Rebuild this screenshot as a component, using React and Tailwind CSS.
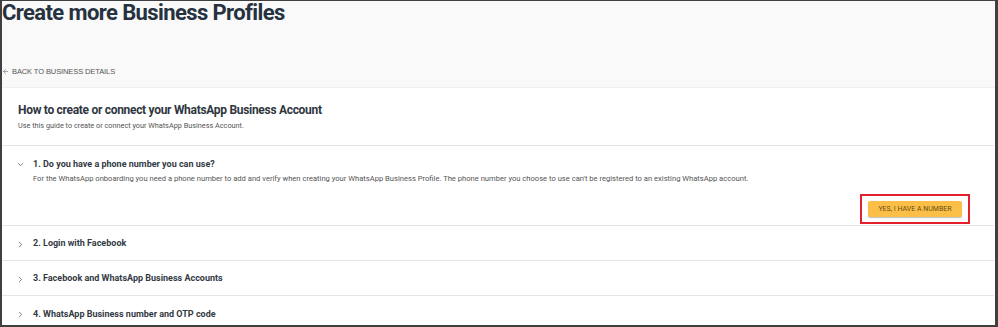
import React from 'react';
import { ChevronDown, ChevronRight, ArrowLeft } from 'lucide-react';

export default function App() {
  const steps = [
    '2. Login with Facebook',
    '3. Facebook and WhatsApp Business Accounts',
    '4. WhatsApp Business number and OTP code',
  ];

  return (
    <div
      className="w-[998px] h-[327px] overflow-hidden bg-white border-t border-l-2 border-r-[3px] border-b-2 border-[#3f3f3f] flex flex-col"
      style={{ fontFamily: 'Roboto, "Liberation Sans", Arial, sans-serif' }}
    >
      {/* Header */}
      <div className="bg-[#f9f9f9] h-[87px] shrink-0 border-b border-[#efefef] flex flex-col">
        <h1 className="text-[22px] leading-[24px] font-bold text-[#26323f] tracking-[-0.6px]">
          Create more Business Profiles
        </h1>
        <div className="mt-[41px] flex items-center gap-[3px] text-[7.5px] text-[#555] tracking-[-0.1px]">
          <ArrowLeft size={7} strokeWidth={2} className="text-[#666]" />
          <span style={{ fontFamily: '"Liberation Sans", Arial, sans-serif' }}>BACK TO BUSINESS DETAILS</span>
        </div>
      </div>

      {/* Card */}
      <div className="flex-1 flex flex-col pr-[1px]">
        <div className="px-[16px] pt-[15px] h-[58px] border-b border-[#e4e4e4]">
          <h2 className="text-[12px] leading-[15px] font-bold text-[#2f3640] tracking-[-0.3px]">
            How to create or connect your WhatsApp Business Account
          </h2>
          <p className="text-[7.3px] leading-[12px] text-[#555] mt-[2px]">
            Use this guide to create or connect your WhatsApp Business Account.
          </p>
        </div>

        <div className="h-[80px] border-b border-[#e4e4e4] flex flex-col">
          <div className="flex items-center pt-[11px] pl-[14px]">
            <ChevronDown size={9} strokeWidth={2} className="text-[#555]" />
            <span className="ml-[8px] text-[9px] leading-[14px] font-bold text-[#333a44]">
              1. Do you have a phone number you can use?
            </span>
          </div>
          <p className="pl-[31px] mt-[2px] text-[7.6px] leading-[12px] text-[#555]">
            For the WhatsApp onboarding you need a phone number to add and verify when creating your WhatsApp Business Profile. The phone number you choose to use can't be registered to an existing WhatsApp account.
          </p>
          <div className="flex justify-end pr-[24px] mt-[9px]">
            <div className="border-2 border-[#e3202c] px-[6px] py-[5px]">
              <button className="w-[94px] h-[16px] rounded-[2px] bg-[#fbbf47] shadow-[0_1px_1px_rgba(0,0,0,0.25)] text-[7px] text-[#6b4e12] flex items-center justify-center">
                YES, I HAVE A NUMBER
              </button>
            </div>
          </div>
        </div>

        {steps.map((s, i) => (
          <div
            key={s}
            className={`h-[35px] shrink-0 flex items-center pl-[14px] pt-[2px] ${i < steps.length - 1 ? 'border-b border-[#e4e4e4]' : ''}`}
          >
            <ChevronRight size={9} strokeWidth={2} className="text-[#555]" />
            <span className="ml-[8px] text-[9px] font-bold text-[#333a44]">{s}</span>
          </div>
        ))}
      </div>
    </div>
  );
}
